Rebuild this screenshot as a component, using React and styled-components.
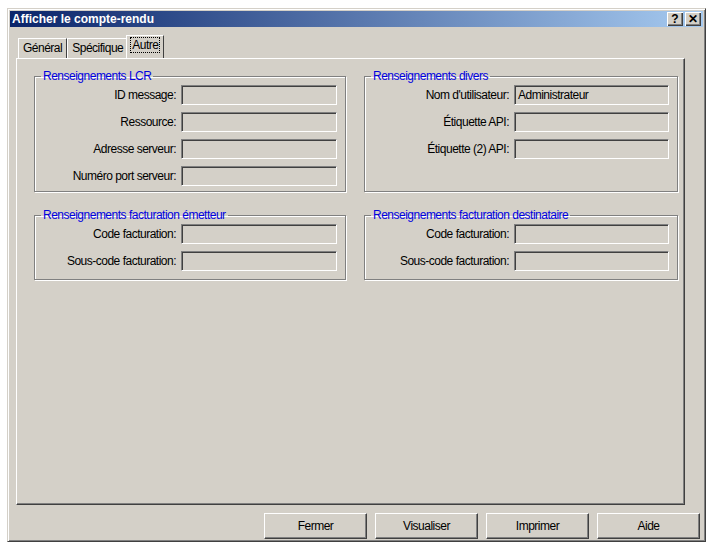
import React from 'react';
import styled, { createGlobalStyle } from 'styled-components';

const Global = createGlobalStyle`
  body { margin: 0; background: #fff; font-family: "Liberation Sans", Arial, sans-serif; }
`;

const Window = styled.div`
  position: relative;
  margin: 8px 6px 0 7px;
  width: 699px;
  height: 534px;
  background: #d4d0c8;
  border: 1px solid;
  border-color: #d4d0c8 #404040 #404040 #d4d0c8;
  box-shadow: inset 1px 1px 0 #fff, inset -1px -1px 0 #808080;
  box-sizing: border-box;
  padding: 2px;
  display: flex;
  flex-direction: column;
`;

const TitleBar = styled.div`
  height: 21px;
  background: linear-gradient(90deg, #0a246a, #a6caf0);
  display: flex;
  align-items: center;
  padding: 0 2px 0 2px;
  color: #fff;
  font: bold 12px "Liberation Sans", Arial, sans-serif;
`;

const Title = styled.div` flex: 1; `;

const TitleBtn = styled.div`
  width: 16px; height: 14px;
  margin-left: 2px;
  background: #d4d0c8;
  color: #000;
  font: bold 12px "Liberation Sans", Arial, sans-serif;
  display: flex; align-items: center; justify-content: center;
  box-shadow: inset 1px 1px 0 #fff, inset -1px -1px 0 #404040, inset -2px -2px 0 #808080;
`;

const Body = styled.div`
  flex: 1;
  display: flex;
  flex-direction: column;
  padding: 9px 18px 0 6px;
  font-size: 12px;
  letter-spacing: -0.5px;
`;

const Tabs = styled.div` display: flex; align-items: flex-end; height: 22px; padding-left: 2px; `;

const Tab = styled.div`
  padding: 0 4px;
  height: ${p => (p.$active ? 22 : 19)}px;
  line-height: 19px;
  border: 1px solid;
  border-color: #fff #404040 transparent #fff;
  border-bottom: none;
  ${p => p.$active && 'margin: 0 -2px; position: relative; z-index: 1; background: #d4d0c8;'}
`;

const Focus = styled.span` outline: 1px dotted #000; padding: 0 1px; `;

const Panel = styled.div`
  height: 435px;
  border: 1px solid;
  border-color: #fff #404040 #404040 #fff;
  box-shadow: inset -1px -1px 0 #808080;
  padding: 10px 8px 0 17px;
  display: grid;
  grid-template-columns: 312px 314px;
  grid-template-rows: 123px 72px;
  column-gap: 18px;
  row-gap: 16px;
  align-content: start;
`;

const Group = styled.fieldset`
  margin: 0;
  padding: 2px 8px 0 0;
  border: 1px solid #808080;
  box-shadow: 1px 1px 0 #fff, inset 1px 1px 0 #fff;
  display: flex; flex-direction: column; gap: 7px;
  legend { color: #0000e0; padding: 0 2px; margin-left: 6px; }
`;

const Row = styled.div` display: flex; align-items: center; `;

const Label = styled.div` width: ${p => p.$w}px; text-align: right; padding-right: 5px; `;

const Field = styled.div`
  flex: 1; height: 20px; box-sizing: border-box;
  border: 1px solid; border-color: #808080 #fff #fff #808080;
  box-shadow: inset 1px 1px 0 #404040, inset -1px -1px 0 #d4d0c8;
  padding: 2px 3px; line-height: 15px;
`;

const Footer = styled.div` display: flex; justify-content: flex-end; gap: 8px; padding: 8px 0 0; margin-right: -15px; `;

const Button = styled.div`
  width: 103px; height: 26px; box-sizing: border-box;
  display: flex; align-items: center; justify-content: center;
  border: 1px solid; border-color: #fff #404040 #404040 #fff;
  box-shadow: inset -1px -1px 0 #808080;
`;

const G = ({ title, lw, rows }) => (
  <Group>
    <legend>{title}</legend>
    {rows.map(([l, v]) => (
      <Row key={l}><Label $w={lw}>{l}</Label><Field>{v}</Field></Row>
    ))}
  </Group>
);

export default function App() {
  return (
    <>
      <Global />
      <Window>
        <TitleBar>
          <Title>Afficher le compte-rendu</Title>
          <TitleBtn>?</TitleBtn>
          <TitleBtn>✕</TitleBtn>
        </TitleBar>
        <Body>
          <Tabs>
            <Tab>Général</Tab>
            <Tab>Spécifique</Tab>
            <Tab $active><Focus>Autre</Focus></Tab>
          </Tabs>
          <Panel>
            <G title="Renseignements LCR" lw={141} rows={[['ID message:'], ['Ressource:'], ['Adresse serveur:'], ['Numéro port serveur:']]} />
            <G title="Renseignements divers" lw={144} rows={[["Nom d'utilisateur:", 'Administrateur'], ['Étiquette API:'], ['Étiquette (2) API:']]} />
            <G title="Renseignements facturation émetteur" lw={141} rows={[['Code facturation:'], ['Sous-code facturation:']]} />
            <G title="Renseignements facturation destinataire" lw={144} rows={[['Code facturation:'], ['Sous-code facturation:']]} />
          </Panel>
          <Footer>
            <Button>Fermer</Button>
            <Button>Visualiser</Button>
            <Button>Imprimer</Button>
            <Button>Aide</Button>
          </Footer>
        </Body>
      </Window>
    </>
  );
}
